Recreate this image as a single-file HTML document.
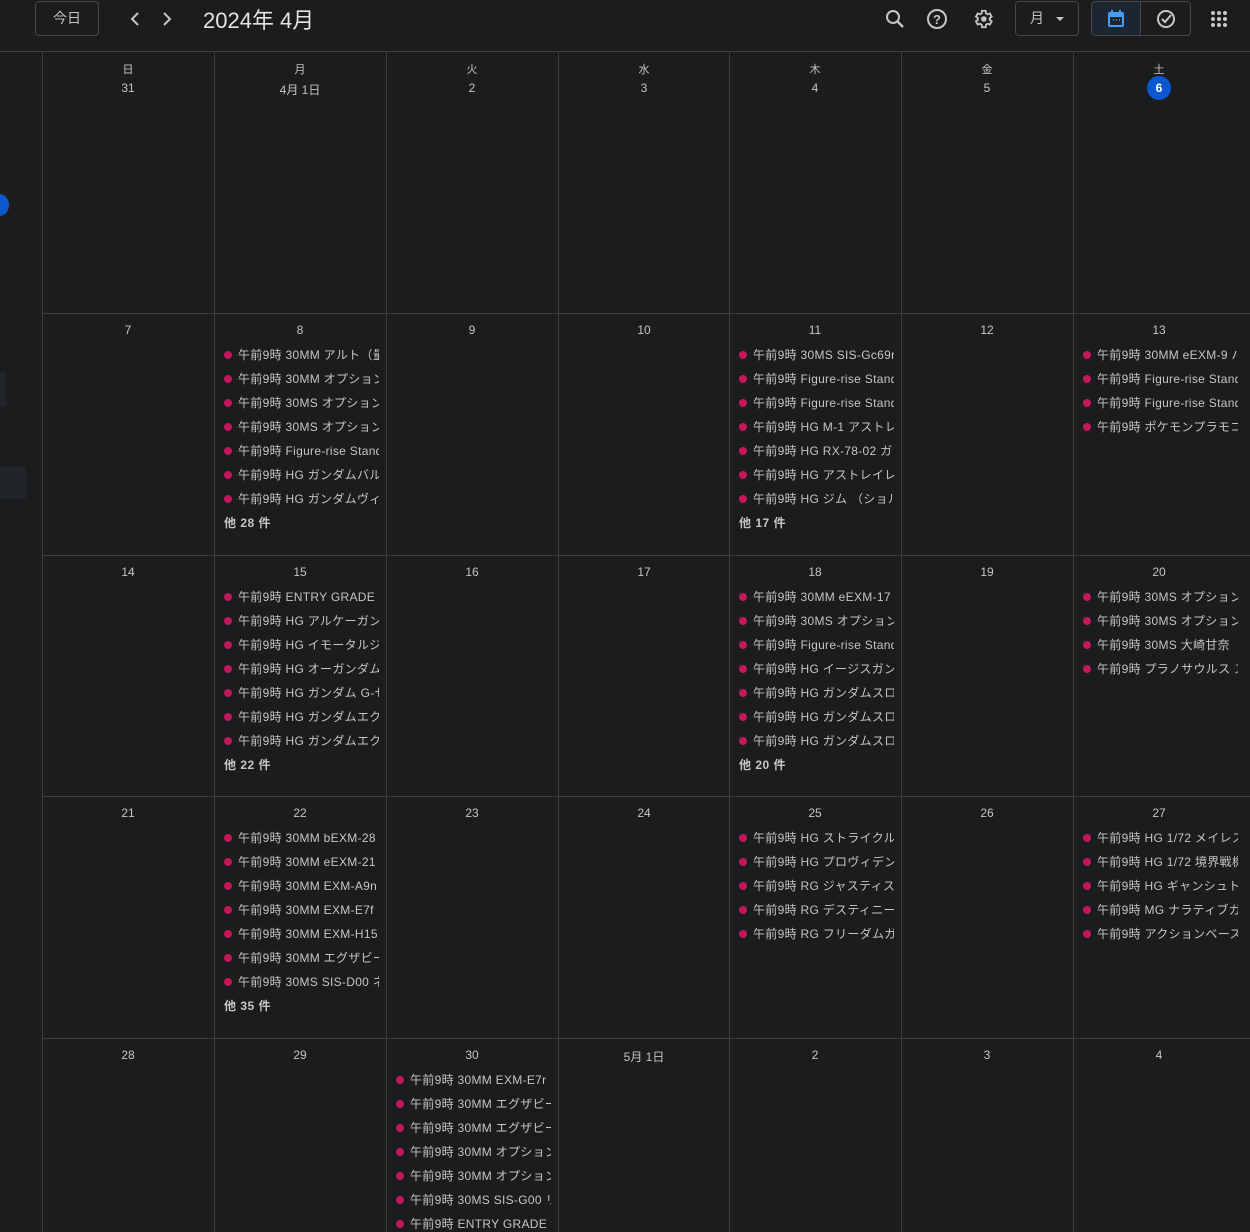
<!DOCTYPE html><html><head><meta charset="utf-8"><style>
*{margin:0;padding:0;box-sizing:border-box}
body{width:1250px;height:1232px;background:#1b1c1d;font-family:"Liberation Sans","Noto Sans CJK JP",sans-serif;color:#c4c7c5;position:relative;overflow:hidden}
.a{position:absolute}
.vl{position:absolute;top:51px;bottom:0;width:1px;background:#3c3d3f}
.hl{position:absolute;left:42px;right:0;height:1px;background:#3c3d3f}
.d{position:absolute;width:172px;text-align:center;font-size:12px;color:#c4c7c5}
.e{position:absolute;height:16px;font-size:12px;line-height:16px;white-space:nowrap;overflow:hidden;width:141px;color:#c4c7c5;letter-spacing:.3px}
.dot{position:absolute;width:8px;height:8px;border-radius:50%;background:#c2185b}
.m{position:absolute;font-size:12px;font-weight:bold;color:#c4c7c5;letter-spacing:.5px}
</style></head><body>
<div class="a" style="left:35px;top:1px;width:64px;height:35px;border:1px solid #444746;border-radius:4px;font-size:14px;line-height:33px;text-align:center">今日</div>
<svg class="a" style="left:126px;top:10px" width="50" height="18"><path d="M12 3 L6 9 L12 15" stroke="#c4c7c5" stroke-width="2" fill="none"/><path d="M38 3 L44 9 L38 15" stroke="#c4c7c5" stroke-width="2" fill="none"/></svg>
<div class="a" style="left:203px;top:3px;font-size:22px;color:#e3e3e3">2024年 4月</div>
<svg class="a" style="left:884px;top:8px" width="22" height="22"><circle cx="9" cy="9" r="6" stroke="#c4c7c5" stroke-width="2" fill="none"/><path d="M13 13 L19 19" stroke="#c4c7c5" stroke-width="2.4"/></svg>
<svg class="a" style="left:926px;top:8px" width="22" height="22"><circle cx="11" cy="11" r="9" stroke="#c4c7c5" stroke-width="2" fill="none"/><text x="11" y="16" font-size="13" font-weight="bold" text-anchor="middle" fill="#c4c7c5" font-family="Liberation Sans">?</text></svg>
<svg class="a" style="left:972px;top:8px" width="22" height="22" viewBox="0 0 24 24"><path d="M19.4 13a7.5 7.5 0 000-2l2.1-1.6-2-3.5-2.5 1a7.5 7.5 0 00-1.700-1L14.9 3h-4l-.4 2.9a7.5 7.5 0 00-1.700 1l-2.500-1-2 3.500L6.4 11a7.5 7.5 0 000 2l-2.1 1.6 2 3.5 2.5-1a7.5 7.5 0 001.7 1l.4 2.9h4l.4-2.9a7.5 7.5 0 001.7-1l2.5 1 2-3.5z" stroke="#c4c7c5" stroke-width="2" fill="none"/><circle cx="12.9" cy="12" r="3" fill="#c4c7c5"/></svg>
<div class="a" style="left:1015px;top:1px;width:64px;height:35px;border:1px solid #444746;border-radius:4px;font-size:14px;line-height:33px;padding-left:14px">月<span style="position:absolute;left:40px;top:15px;border:4px solid transparent;border-top:4px solid #c4c7c5"></span></div>
<div class="a" style="left:1091px;top:1px;width:100px;height:35px;border:1px solid #444746;border-radius:4px;overflow:hidden"><div style="position:absolute;left:0;top:0;width:49px;height:35px;background:#1c2633;border-right:1px solid #444746"></div></div>
<svg class="a" style="left:1107px;top:9px" width="18" height="19"><rect x="2" y="4" width="14" height="13" rx="1" stroke="#4a9cf5" stroke-width="2" fill="none"/><rect x="2" y="4" width="14" height="4" fill="#4a9cf5"/><path d="M5 1v4M13 1v4" stroke="#4a9cf5" stroke-width="2"/><path d="M6 11h1M9 11h1M12 11h1" stroke="#4a9cf5" stroke-width="1.5"/></svg>
<svg class="a" style="left:1156px;top:9px" width="20" height="20"><circle cx="10" cy="10" r="8" stroke="#c4c7c5" stroke-width="2" fill="none"/><path d="M6 10l3 3 6-7" stroke="#c4c7c5" stroke-width="2" fill="none"/></svg>
<svg class="a" style="left:1211px;top:11px" width="16" height="16" fill="#c4c7c5"><circle cx="2" cy="2" r="2"/><circle cx="8" cy="2" r="2"/><circle cx="14" cy="2" r="2"/><circle cx="2" cy="8" r="2"/><circle cx="8" cy="8" r="2"/><circle cx="14" cy="8" r="2"/><circle cx="2" cy="14" r="2"/><circle cx="8" cy="14" r="2"/><circle cx="14" cy="14" r="2"/></svg>
<div class="a" style="left:-10px;top:194px;width:19px;height:22px;border-radius:50%;background:#0b57d0"></div>
<div class="a" style="left:0;top:372px;width:6px;height:34px;background:#222528"></div>
<div class="a" style="left:0;top:467px;width:26px;height:32px;background:#222528"></div>
<div class="a" style="left:0;top:51px;width:1250px;height:1px;background:#3c3d3f"></div>
<div class="vl" style="left:42px"></div><div class="vl" style="left:214px"></div><div class="vl" style="left:386px"></div><div class="vl" style="left:558px"></div><div class="vl" style="left:729px"></div><div class="vl" style="left:901px"></div><div class="vl" style="left:1073px"></div>
<div class="hl" style="top:313px"></div><div class="hl" style="top:555px"></div><div class="hl" style="top:796px"></div><div class="hl" style="top:1038px"></div>
<div class="d" style="left:42px;top:61px;font-size:11px">日</div><div class="d" style="left:214px;top:61px;font-size:11px">月</div><div class="d" style="left:386px;top:61px;font-size:11px">火</div><div class="d" style="left:558px;top:61px;font-size:11px">水</div><div class="d" style="left:729px;top:61px;font-size:11px">木</div><div class="d" style="left:901px;top:61px;font-size:11px">金</div><div class="d" style="left:1073px;top:61px;font-size:11px">土</div>
<div class="d" style="left:42px;top:81px">31</div><div class="d" style="left:214px;top:81px">4月 1日</div><div class="d" style="left:386px;top:81px">2</div><div class="d" style="left:558px;top:81px">3</div><div class="d" style="left:729px;top:81px">4</div><div class="d" style="left:901px;top:81px">5</div>
<div class="a" style="left:1147px;top:76px;width:24px;height:24px;border-radius:50%;background:#0b57d0;color:#fff;font-size:12px;font-weight:bold;text-align:center;line-height:24px">6</div>
<div class="d" style="left:42px;top:323px">7</div><div class="d" style="left:214px;top:323px">8</div><div class="d" style="left:386px;top:323px">9</div><div class="d" style="left:558px;top:323px">10</div><div class="d" style="left:729px;top:323px">11</div><div class="d" style="left:901px;top:323px">12</div><div class="d" style="left:1073px;top:323px">13</div>
<div class="d" style="left:42px;top:565px">14</div><div class="d" style="left:214px;top:565px">15</div><div class="d" style="left:386px;top:565px">16</div><div class="d" style="left:558px;top:565px">17</div><div class="d" style="left:729px;top:565px">18</div><div class="d" style="left:901px;top:565px">19</div><div class="d" style="left:1073px;top:565px">20</div>
<div class="d" style="left:42px;top:806px">21</div><div class="d" style="left:214px;top:806px">22</div><div class="d" style="left:386px;top:806px">23</div><div class="d" style="left:558px;top:806px">24</div><div class="d" style="left:729px;top:806px">25</div><div class="d" style="left:901px;top:806px">26</div><div class="d" style="left:1073px;top:806px">27</div>
<div class="d" style="left:42px;top:1048px">28</div><div class="d" style="left:214px;top:1048px">29</div><div class="d" style="left:386px;top:1048px">30</div><div class="d" style="left:558px;top:1048px">5月 1日</div><div class="d" style="left:729px;top:1048px">2</div><div class="d" style="left:901px;top:1048px">3</div><div class="d" style="left:1073px;top:1048px">4</div>
<div id="ev"></div>
<script>
var data=[
[214,313,["30MM アルト（量産型）","30MM オプションパーツ","30MS オプションヘア","30MS オプションボディ","Figure-rise Standard","HG ガンダムバルバトス","HG ガンダムヴィダール"],"他 28 件"],
[729,313,["30MS SIS-Gc69r","Figure-rise Standard","Figure-rise Standard","HG M-1 アストレイ","HG RX-78-02 ガンダム","HG アストレイレッド","HG ジム （ショルダー"],"他 17 件"],
[1073,313,["30MM eEXM-9 バ","Figure-rise Standard","Figure-rise Standard","ポケモンプラモコレ"],""],
[214,555,["ENTRY GRADE RX","HG アルケーガンダム","HG イモータルジャス","HG オーガンダム","HG ガンダム G-セルフ","HG ガンダムエクシア","HG ガンダムエクシア"],"他 22 件"],
[729,555,["30MM eEXM-17","30MS オプションボディ","Figure-rise Standard","HG イージスガンダム","HG ガンダムスローネ","HG ガンダムスローネ","HG ガンダムスローネ"],"他 20 件"],
[1073,555,["30MS オプションボディ","30MS オプションヘア","30MS 大崎甘奈","プラノサウルス ステゴ"],""],
[214,796,["30MM bEXM-28","30MM eEXM-21","30MM EXM-A9n","30MM EXM-E7f","30MM EXM-H15","30MM エグザビーク","30MS SIS-D00 ネ"],"他 35 件"],
[729,796,["HG ストライクルージュ","HG プロヴィデンス","RG ジャスティス","RG デスティニー","RG フリーダムガンダム"],""],
[1073,796,["HG 1/72 メイレスジ","HG 1/72 境界戦機","HG ギャンシュトローム","MG ナラティブガンダム","アクションベース"],""],
[386,1038,["30MM EXM-E7r","30MM エグザビーク","30MM エグザビーク","30MM オプションパーツ","30MM オプションパーツ","30MS SIS-G00 リ","ENTRY GRADE v"],""]
];
var h="";
data.forEach(function(c){var x=c[0],t=c[1];c[2].forEach(function(s,i){var y=t+34+i*24;h+='<div class="dot" style="left:'+(x+10)+'px;top:'+(y+4)+'px"></div><div class="e" style="left:'+(x+24)+'px;top:'+y+'px">午前9時 '+s+'</div>';});if(c[3])h+='<div class="m" style="left:'+(x+10)+'px;top:'+(t+201)+'px">'+c[3]+'</div>';});
document.getElementById("ev").innerHTML=h;
</script>
</body></html>
